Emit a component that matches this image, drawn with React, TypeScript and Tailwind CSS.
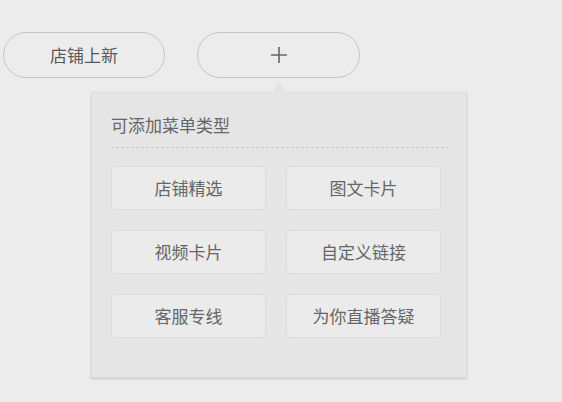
import React from 'react';

const menuTypes = ['店铺精选', '图文卡片', '视频卡片', '自定义链接', '客服专线', '为你直播答疑'];

const font = { fontFamily: '"Noto Sans CJK SC", "Liberation Sans", sans-serif' };

const App: React.FC = () => {
  return (
    <div className="w-[562px] h-[402px] bg-[#ececec] overflow-hidden" style={font}>
      <div className="flex gap-[32px] pt-[32px] pl-[3px]">
        <button className="w-[162px] h-[46px] rounded-full border border-[#c4c4c4] text-[17px] text-[#5a5a5a] flex items-center justify-center">
          店铺上新
        </button>
        <button className="w-[163px] h-[46px] rounded-full border border-[#c4c4c4] flex items-center justify-center">
          <svg width="18" height="18" viewBox="0 0 18 18" className="text-[#666]">
            <path d="M9 1v16M1 9h16" stroke="currentColor" strokeWidth="1.6" />
          </svg>
        </button>
      </div>
      <div className="relative ml-[91px] mt-[14px] w-[376px] h-[286px] bg-[#e5e5e5] border border-[#dedede] shadow-[0_1px_2px_rgba(0,0,0,0.18)] px-[19px] pt-[20px]">
        <div className="absolute -top-[12px] left-[180px] w-0 h-0 border-x-[7px] border-x-transparent border-b-[12px] border-b-[#e3e3e3]" />
        <div className="text-[17px] leading-[24px] text-[#666]">可添加菜单类型</div>
        <div className="mt-[10px] border-t border-dashed border-[#c8c8c8] w-[338px]" />
        <div className="mt-[18px] grid grid-cols-[155px_155px] gap-x-[20px] gap-y-[20px]">
          {menuTypes.map((t) => (
            <button
              key={t}
              className="h-[44px] rounded-[3px] border border-[#dcdcdc] bg-[#ebebeb] text-[17px] text-[#666] flex items-center justify-center"
            >
              {t}
            </button>
          ))}
        </div>
      </div>
    </div>
  );
};

export default App;
